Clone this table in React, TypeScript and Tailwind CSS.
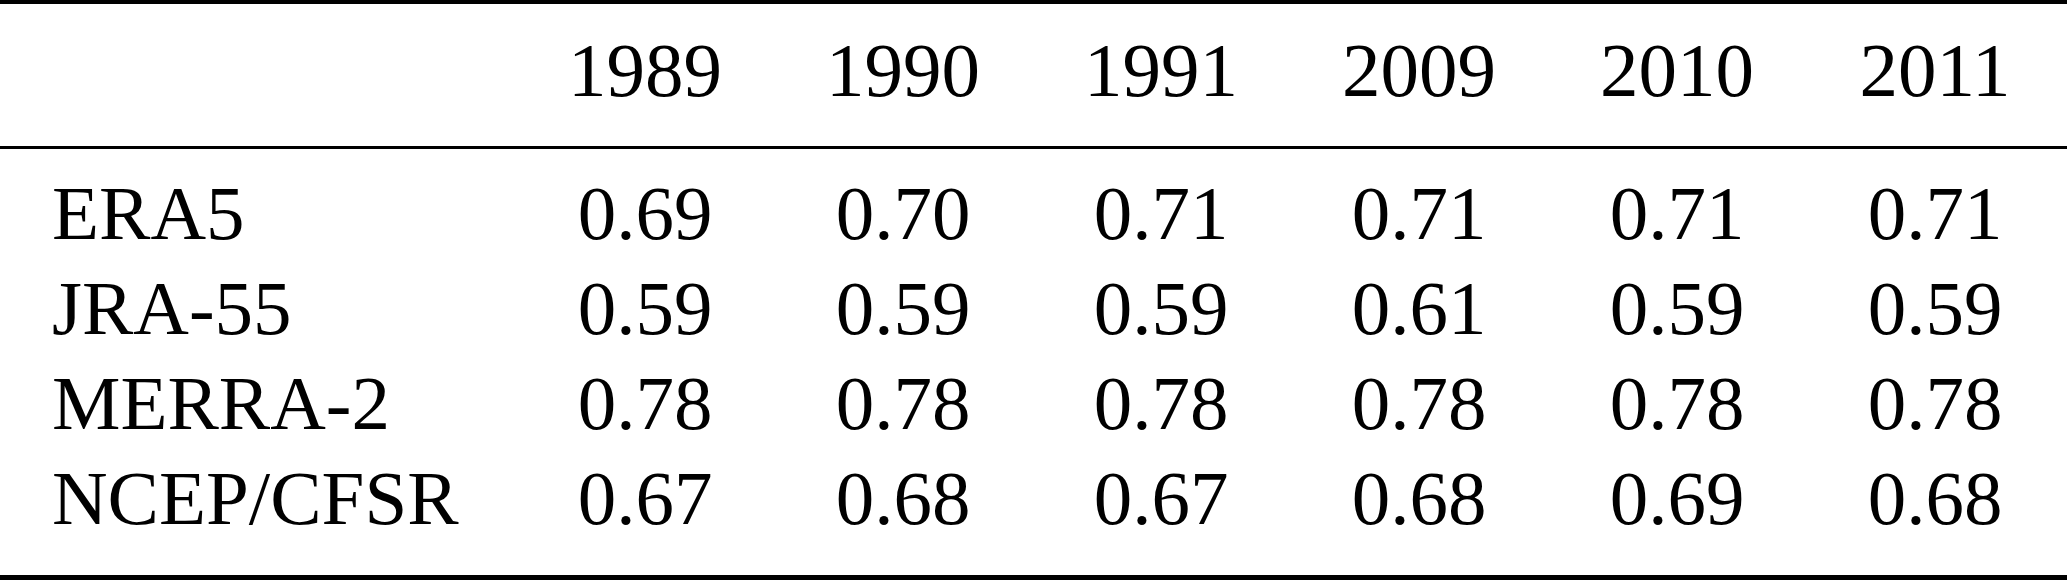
import React from 'react';

const YEARS = ['1989', '1990', '1991', '2009', '2010', '2011'];

const ROWS: { name: string; values: string[] }[] = [
  { name: 'ERA5', values: ['0.69', '0.70', '0.71', '0.71', '0.71', '0.71'] },
  { name: 'JRA-55', values: ['0.59', '0.59', '0.59', '0.61', '0.59', '0.59'] },
  { name: 'MERRA-2', values: ['0.78', '0.78', '0.78', '0.78', '0.78', '0.78'] },
  { name: 'NCEP/CFSR', values: ['0.67', '0.68', '0.67', '0.68', '0.69', '0.68'] },
];

const cols = 'grid grid-cols-[516px_repeat(6,258px)]';

export default function App() {
  return (
    <div className="w-[2067px] h-[584px] bg-white text-black font-['Liberation_Serif',serif] text-[77px] leading-[95px]">
      {/* top rule */}
      <div className="h-[4px] bg-black" />

      {/* header */}
      <div className={`${cols} pt-[19px] pb-[28px]`}>
        <div />
        {YEARS.map((y) => (
          <div key={y} className="text-center">
            {y}
          </div>
        ))}
      </div>

      {/* mid rule */}
      <div className="h-[3px] bg-black" />

      {/* body */}
      <div className="pt-[17px] pb-[29px]">
        {ROWS.map((row) => (
          <div key={row.name} className={cols}>
            <div className="pl-[52px] whitespace-nowrap">{row.name}</div>
            {row.values.map((v, i) => (
              <div key={i} className="text-center">
                {v}
              </div>
            ))}
          </div>
        ))}
      </div>

      {/* bottom rule */}
      <div className="h-[5px] bg-black" />
    </div>
  );
}
